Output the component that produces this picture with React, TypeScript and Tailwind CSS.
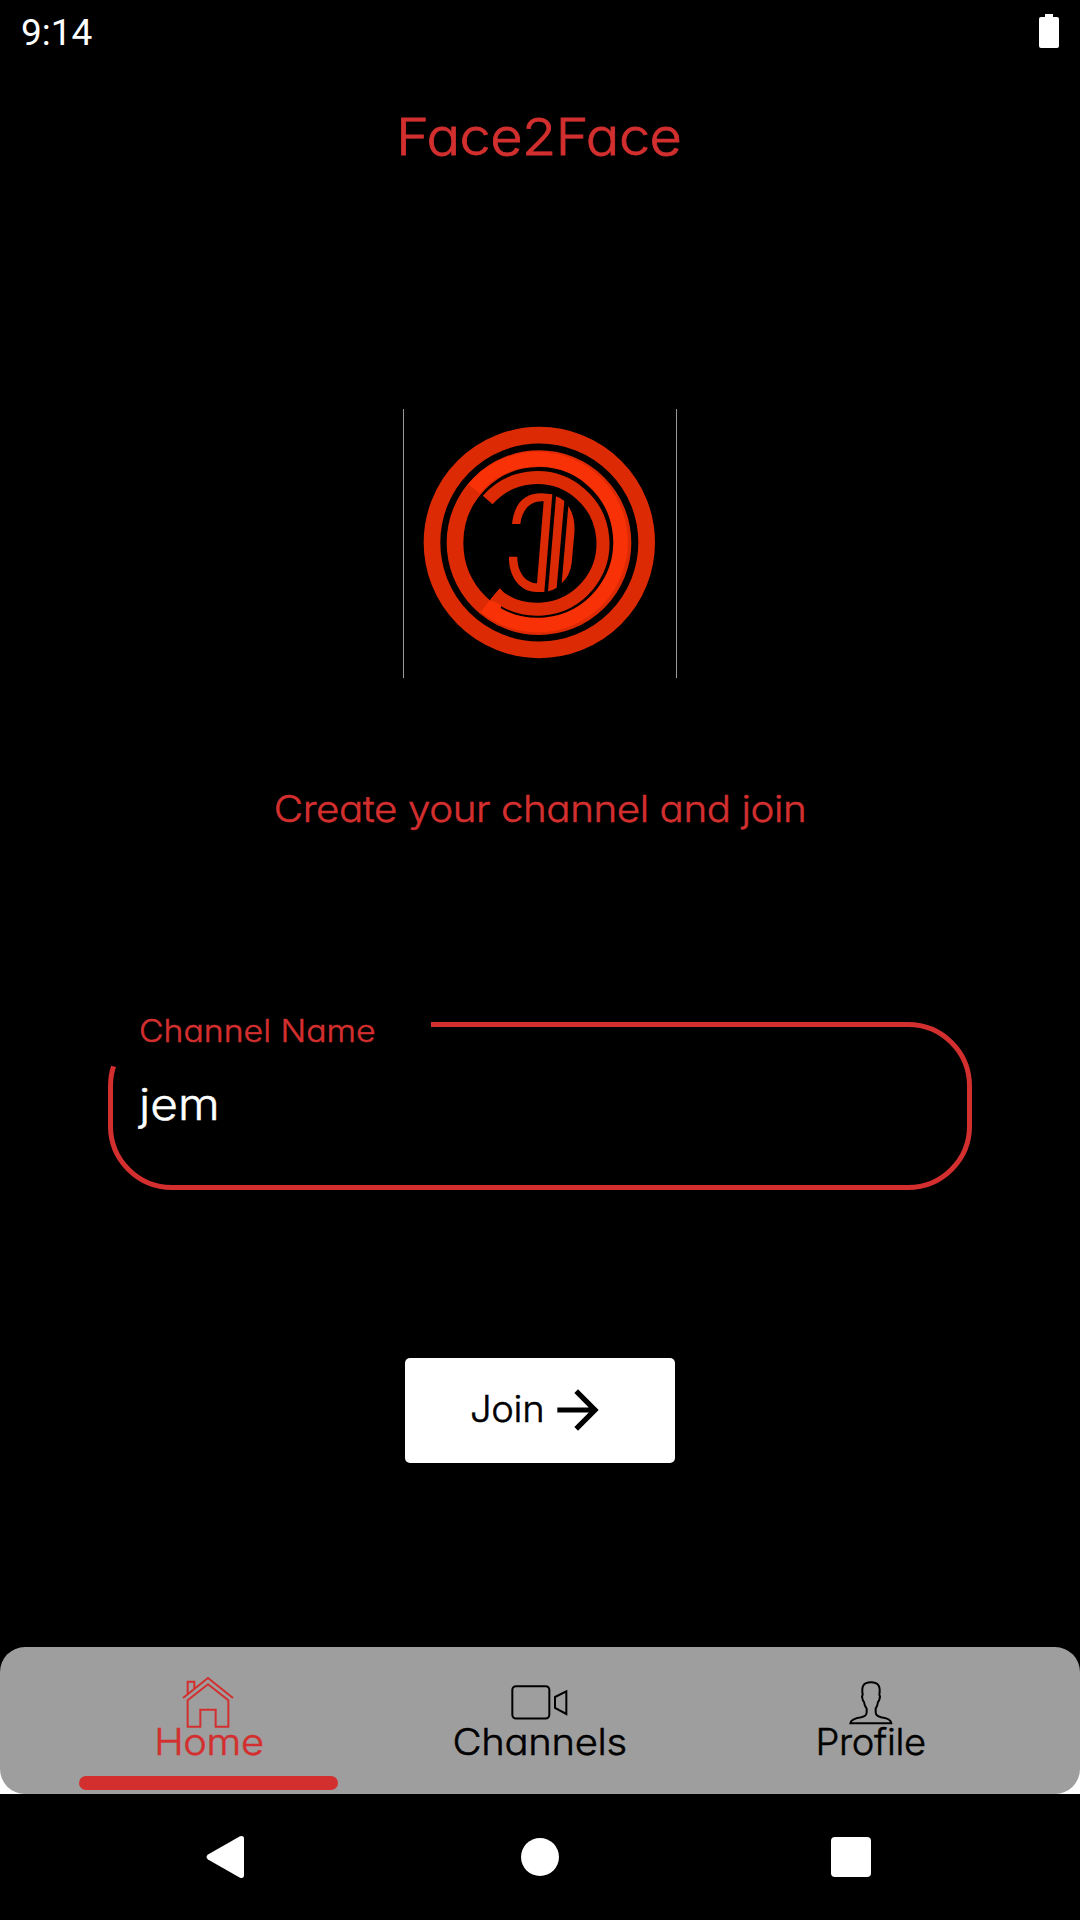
import React from "react";

function StatusBar() {
  return (
    <div className="flex h-16 items-center justify-between pl-[21px] pr-[21px] text-white">
      <span className="pt-[2px] font-['Roboto',sans-serif] text-[37px] font-normal leading-[64px] [-webkit-text-stroke:0]">9:14</span>
      <svg className="-mt-[2px] h-[34px] w-[20px]" viewBox="0 0 20 34" fill="currentColor">
        <path d="M6 0h8v3h4a2 2 0 0 1 2 2v27a2 2 0 0 1-2 2H2a2 2 0 0 1-2-2V5a2 2 0 0 1 2-2h4z" />
      </svg>
    </div>
  );
}

function Logo() {
  return (
    <div className="mx-auto h-[269px] w-[274px] border-x border-[#9a9a9a]">
      <svg className="h-[269px] w-[272px]" viewBox="42 27 816 807" fill="none">
        <circle cx="448" cy="427.500" r="322" stroke="#dc2a04" strokeWidth="50" />
        <circle cx="447" cy="428" r="252" stroke="#dc2a04" strokeWidth="50" />
        <path d="M252 266A249 249 0 1 1 285 619" stroke="#f83106" strokeWidth="44" />
        <path d="M293 300A197.500 197.500 0 1 1 315 582" stroke="#dc2a04" strokeWidth="39" />
        <path d="M330 565L300 600L331 628L334 616L360 600Z" fill="#dc2a04" />
        <path d="M300 600L285 619L320 640L331 626L334 616Z" fill="#f83106" />
        <path
          d="M366 372Q376 280 455 280L487 283L463 576H440C390 576 355 530 357 470H382C382 515 405 548 441 550L461 304C420 302 396 330 391 372Z"
          fill="#dc2a04"
        />
        <path d="M498 289Q513 294 523 303L500 563Q488 571 474 574Z" fill="#dc2a04" />
        <path d="M535 318Q557 352 553 400L545 490Q540 528 515 550Z" fill="#dc2a04" />
      </svg>
    </div>
  );
}

function ChannelField() {
  return (
    <div className="relative mx-auto h-[168px] w-[864px]">
      <div className="absolute inset-0 rounded-[64px] border-[5px] border-[#d32f2f] [clip-path:polygon(323px_0,100%_0,100%_100%,0_100%,0_43px,8px_45px,323px_45px)]" />
      <label className="absolute left-[31px] top-[-11px] origin-left scale-x-[1.09] whitespace-nowrap text-[31px] leading-[40px] text-[#d32f2f]">
        Channel Name
      </label>
      <div className="w-fit origin-left scale-x-[1.11] pl-[28px] pt-[57px] text-[43px] leading-[50px] text-white">
        jem
      </div>
    </div>
  );
}

function HomeIcon() {
  return (
    <svg className="h-[52px] w-[54px]" viewBox="366 109 162 156" fill="none" stroke="currentColor" strokeWidth="6">
      <path d="M369 175L444 115L519 175M383 162V126H403V147" />
      <path d="M383 182L444 134L505 182V261H467V210H421V261H383Z" />
    </svg>
  );
}

function CameraIcon() {
  return (
    <svg className="h-[52px] w-[57px]" viewBox="242 47 171 156" fill="none" stroke="currentColor" strokeWidth="6">
      <rect x="246" y="77.500" width="111" height="97" rx="11" />
      <path d="M374 110L408 93V161L374 143Z" />
    </svg>
  );
}

function ProfileIcon() {
  return (
    <svg className="h-[52px] w-[44px]" viewBox="205 107 132 156" fill="none" stroke="currentColor" strokeWidth="6">
      <path d="M209 249C211 237 226 233 242 231C254 228 258 225 258 216V205C253 199 251 193 250 185C246 182 245 175 244 169L246 163C242 139 247 126 271 126C294 126 300 139 296 163L298 169C297 176 296 182 292 185C291 193 289 199 285 205V216C285 225 290 228 301 231C317 233 331 237 332 249Z" />
    </svg>
  );
}

type TabProps = { label: string; icon: React.ReactNode; textClass: string; active?: boolean };

function Tab({ label, icon, textClass, active }: TabProps) {
  return (
    <div className={active ? "flex w-[259px] flex-col items-center text-[#d32f2f]" : "flex w-[259px] flex-col items-center text-black"}>
      <div className="mt-[29px] flex h-[52px] items-end">{icon}</div>
      <span className={textClass}>{label}</span>
      {active && <div className="mt-[14px] h-[14px] w-[259px] rounded-full bg-[#d32f2f]" />}
    </div>
  );
}

function BottomTabs() {
  return (
    <div className="bg-[linear-gradient(to_bottom,#000_50%,#fff_50%)]">
      <nav className="flex h-[147px] justify-between rounded-[25px] bg-[#9e9e9e] pl-[79px] pr-[80px]">
        <Tab active label="Home" icon={<HomeIcon />} textClass="h-[34px] scale-x-[1.075] whitespace-nowrap text-[37px] leading-[27px] tracking-[-0.3px]" />
        <Tab label="Channels" icon={<CameraIcon />} textClass="h-[34px] scale-x-[1.08] whitespace-nowrap text-[37px] leading-[27px] tracking-[-0.3px]" />
        <Tab label="Profile" icon={<ProfileIcon />} textClass="h-[34px] scale-x-[1.03] whitespace-nowrap text-[37px] leading-[27px] tracking-[-0.3px]" />
      </nav>
    </div>
  );
}

function SystemBar() {
  return (
    <div className="flex h-[126px] items-center justify-between pl-[206px] pr-[209px] text-white">
      <svg className="h-[44px] w-[38px]" viewBox="0 0 38 44" fill="currentColor">
        <path d="M2 19.500L34 1.300Q38 0 38 4V40Q38 44 34 42.700L2 24.500Q-1 22 2 19.500Z" />
      </svg>
      <div className="ml-[5px] size-[38px] rounded-full bg-white" />
      <div className="size-[40px] rounded-[4px] bg-white" />
    </div>
  );
}

export default function App() {
  return (
    <div className="flex h-[1920px] w-[1080px] flex-col overflow-hidden bg-black font-['Inter',sans-serif] font-light [-webkit-text-stroke:0.5px] [font-feature-settings:'cv11']">
      <StatusBar />
      <main className="flex flex-1 flex-col">
        <h1 className="mt-[43px] h-[60px] scale-x-[1.095] whitespace-nowrap pr-[2px] text-center text-[51px] leading-[60px] tracking-[-0.5px] text-[#d32f2f] [-webkit-text-stroke:0.8px]">
          Face2Face
        </h1>
        <div className="mt-[242px]">
          <Logo />
        </div>
        <p className="mt-[111px] h-[40px] scale-x-[1.09] whitespace-nowrap text-center text-[37px] leading-[40px] tracking-[-0.4px] text-[#d32f2f]">
          Create your channel and join
        </p>
        <div className="mt-[193px]">
          <ChannelField />
        </div>
        <button className="mx-auto mt-[168px] flex h-[105px] w-[270px] items-center rounded-[5px] bg-white pl-[65px] text-black">
          <span className="-mt-[4px] w-[77px] origin-left scale-x-[1.03] whitespace-nowrap text-left text-[37px] leading-[40px] tracking-[-0.3px]">
            Join
          </span>
          <svg className="-mt-px size-[62px]" viewBox="0 0 24 24" fill="currentColor">
            <path d="M12 4l-1.410 1.410L16.170 11H4v2h12.170l-5.580 5.590L12 20l8-8z" />
          </svg>
        </button>
      </main>
      <BottomTabs />
      <SystemBar />
    </div>
  );
}
